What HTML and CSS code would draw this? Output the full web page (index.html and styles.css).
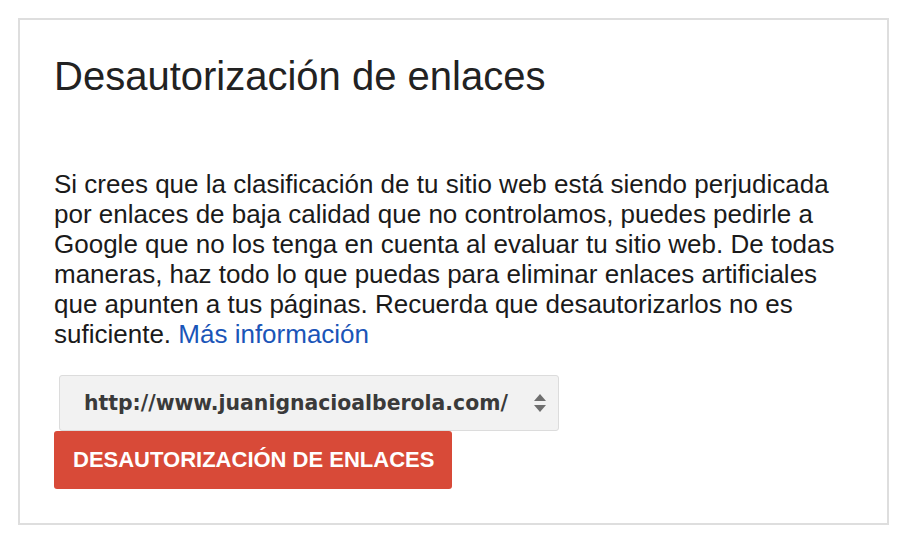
FILE: index.html
```html
<!DOCTYPE html>
<html lang="es">
<head>
<meta charset="utf-8">
<title>Desautorización de enlaces</title>
<link rel="stylesheet" href="styles.css">
</head>
<body>
<div class="card">
  <h1 class="title">Desautorización de enlaces</h1>
  <p class="desc">Si crees que la clasificación de tu sitio web está siendo perjudicada por enlaces de baja calidad que no controlamos, puedes pedirle a Google que no los tenga en cuenta al evaluar tu sitio web. De todas maneras, haz todo lo que puedas para eliminar enlaces artificiales que apunten a tus páginas. Recuerda que desautorizarlos no es suficiente. <a class="link" href="#">Más información</a></p>
  <div class="form">
    <div class="select">
      <span class="select-value">http://www.juanignacioalberola.com/</span>
      <svg class="select-arrows" width="14" height="22" viewBox="0 0 14 22"><path d="M7 2 L13 9 H1 Z" fill="#6f6f6f"/><path d="M1 13 H13 L7 20 Z" fill="#6f6f6f"/></svg>
    </div>
    <button class="btn" type="button">DESAUTORIZACIÓN DE ENLACES</button>
  </div>
</div>
</body>
</html>
```
FILE: styles.css
```css
html, body {
  margin: 0;
  padding: 0;
  background: #ffffff;
}
body {
  font-family: "Liberation Sans", Arial, sans-serif;
  color: #222222;
}
.card {
  box-sizing: border-box;
  width: 871px;
  height: 507px;
  margin: 18px 0 0 18px;
  border: 2px solid #dedede;
  padding: 33px 35px 0 34px;
}
.title {
  margin: 0;
  font-size: 40px;
  line-height: 46px;
  font-weight: normal;
  color: #222222;
}
.desc {
  margin: 71px 0 0 0;
  font-size: 26px;
  line-height: 29.9px;
  color: #1a1a1a;
}
.link {
  color: #1a55b8;
  text-decoration: none;
}
.form {
  display: flex;
  flex-direction: column;
  align-items: flex-start;
  margin-top: 26px;
}
.select {
  box-sizing: border-box;
  width: 500px;
  height: 56px;
  margin-left: 5px;
  display: flex;
  align-items: center;
  justify-content: space-between;
  padding: 0 11px 0 24px;
  background: #f2f2f2;
  border: 1px solid #dcdcdc;
  border-radius: 3px;
}
.select-value {
  font-family: "DejaVu Sans", Verdana, sans-serif;
  font-size: 20.4px;
  font-weight: bold;
  color: #3a3a3a;
}
.select-arrows {
  display: block;
}
.btn {
  box-sizing: border-box;
  width: 398px;
  height: 58px;
  margin: 0;
  padding: 0 0 0 19px;
  text-align: left;
  border: none;
  border-radius: 3px;
  background: #d84a38;
  color: #ffffff;
  font-family: "Liberation Sans", Arial, sans-serif;
  font-size: 22px;
  font-weight: bold;
}
```
